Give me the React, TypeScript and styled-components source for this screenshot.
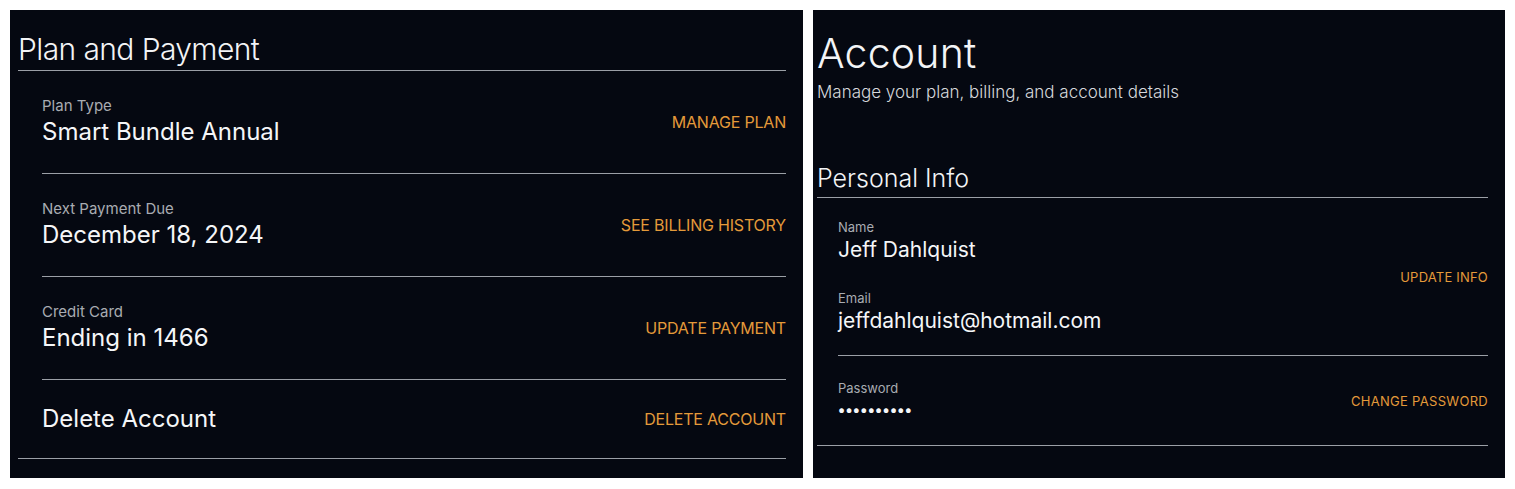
import styled, { createGlobalStyle } from "styled-components";

const GlobalStyle = createGlobalStyle`
  html, body {
    margin: 0;
    padding: 0;
    background: #ffffff;
  }
  body {
    font-family: Inter, "Liberation Sans", sans-serif;
  }
`;

const Page = styled.div`
  display: flex;
  align-items: flex-start;
  gap: 10px;
  padding: 10px;
`;

const Panel = styled.section<{ width: number; padLeft: number }>`
  box-sizing: border-box;
  width: ${(p) => p.width}px;
  height: 468px;
  padding: 0 17px 0 ${(p) => p.padLeft}px;
  background: #050811;
  color: #f3f4f6;
  display: flex;
  flex-direction: column;
`;

const PageTitle = styled.h1`
  margin: 0;
  padding-top: 21px;
  font-size: 41px;
  line-height: 44px;
  font-weight: 300;
  letter-spacing: 0.2px;
`;

const Subtitle = styled.p`
  margin: 6px 0 0;
  font-size: 17px;
  line-height: 22px;
  font-weight: 300;
  color: #d6d8dc;
`;

const SectionTitle = styled.h2<{ size: number; top: number; bottom: number; tracking?: number }>`
  margin: 0;
  padding: ${(p) => p.top}px 0 ${(p) => p.bottom}px;
  font-size: ${(p) => p.size}px;
  line-height: ${(p) => Math.round(p.size * 1.2)}px;
  font-weight: 300;
  letter-spacing: ${(p) => p.tracking ?? 0}px;
  border-bottom: 1px solid #9b9fa6;
`;

const List = styled.div`
  border-bottom: 1px solid #9b9fa6;
`;

const Row = styled.div<{ height: number; indent: number; last?: boolean }>`
  box-sizing: border-box;
  height: ${(p) => p.height}px;
  margin-left: ${(p) => p.indent}px;
  display: flex;
  align-items: center;
  justify-content: space-between;
  border-bottom: ${(p) => (p.last ? "none" : "1px solid #9b9fa6")};
`;

const Fields = styled.div<{ gap: number }>`
  display: flex;
  flex-direction: column;
  gap: ${(p) => p.gap}px;
`;

const Field = styled.div`
  display: flex;
  flex-direction: column;
`;

const Label = styled.span<{ size: number }>`
  font-size: ${(p) => p.size}px;
  line-height: ${(p) => Math.round(p.size * 1.36)}px;
  color: #a9acb2;
`;

const Value = styled.span<{ size: number }>`
  font-size: ${(p) => p.size}px;
  line-height: ${(p) => Math.round(p.size * 1.35)}px;
  color: #f5f6f8;
`;

const Dots = styled.span`
  font-size: 15px;
  line-height: 26px;
  font-weight: 700;
  letter-spacing: 0.3px;
  color: #f5f6f8;
`;

const ActionLink = styled.a<{ size: number; tracking?: number }>`
  font-size: ${(p) => p.size}px;
  line-height: ${(p) => Math.round(p.size * 1.25)}px;
  letter-spacing: ${(p) => p.tracking ?? 0}px;
  color: #e49a3a;
  text-transform: uppercase;
  text-decoration: none;
  white-space: nowrap;
  cursor: pointer;
`;

const planRows = [
  { label: "Plan Type", value: "Smart Bundle Annual", action: "Manage Plan" },
  { label: "Next Payment Due", value: "December 18, 2024", action: "See Billing History" },
  { label: "Credit Card", value: "Ending in 1466", action: "Update Payment" },
];

export default function App() {
  return (
    <>
      <GlobalStyle />
      <Page>
        <Panel width={793} padLeft={8}>
          <SectionTitle size={30} top={21} bottom={3} tracking={-0.6}>
            Plan and Payment
          </SectionTitle>
          <List>
            {planRows.map((row) => (
              <Row key={row.label} height={103} indent={24}>
                <Field>
                  <Label size={15}>{row.label}</Label>
                  <Value size={24}>{row.value}</Value>
                </Field>
                <ActionLink size={16} tracking={-0.2}>
                  {row.action}
                </ActionLink>
              </Row>
            ))}
            <Row height={78} indent={24} last>
              <Value size={24}>Delete Account</Value>
              <ActionLink size={16} tracking={-0.2}>
                Delete Account
              </ActionLink>
            </Row>
          </List>
        </Panel>

        <Panel width={692} padLeft={4}>
          <PageTitle>Account</PageTitle>
          <Subtitle>Manage your plan, billing, and account details</Subtitle>
          <SectionTitle size={25} top={60} bottom={4}>
            Personal Info
          </SectionTitle>
          <List>
            <Row height={158} indent={21}>
              <Fields gap={25}>
                <Field>
                  <Label size={13}>Name</Label>
                  <Value size={21}>Jeff Dahlquist</Value>
                </Field>
                <Field>
                  <Label size={13}>Email</Label>
                  <Value size={21}>jeffdahlquist@hotmail.com</Value>
                </Field>
              </Fields>
              <ActionLink size={13} tracking={0.2}>
                Update Info
              </ActionLink>
            </Row>
            <Row height={89} indent={21} last>
              <Field>
                <Label size={13}>Password</Label>
                <Dots>••••••••••</Dots>
              </Field>
              <ActionLink size={13} tracking={0.3}>
                Change Password
              </ActionLink>
            </Row>
          </List>
        </Panel>
      </Page>
    </>
  );
}
